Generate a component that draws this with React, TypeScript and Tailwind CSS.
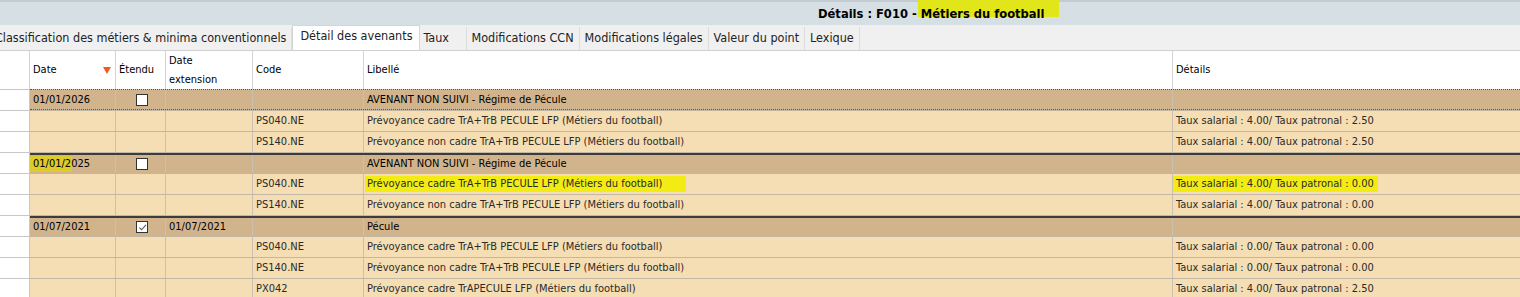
import React from "react";

type Row = {
	group: boolean;
	date?: string;
	extended?: boolean;
	extDate?: string;
	code?: string;
	label: string;
	details?: string;
	focus?: boolean;
	markDate?: boolean;
	markLine?: boolean;
};

const ROWS: Row[] = [
	{ group: true, date: "01/01/2026", extended: false, label: "AVENANT NON SUIVI - Régime de Pécule", focus: true },
	{ group: false, code: "PS040.NE", label: "Prévoyance cadre TrA+TrB PECULE LFP (Métiers du football)", details: "Taux salarial : 4.00/ Taux patronal : 2.50" },
	{ group: false, code: "PS140.NE", label: "Prévoyance non cadre TrA+TrB PECULE LFP (Métiers du football)", details: "Taux salarial : 4.00/ Taux patronal : 2.50" },
	{ group: true, date: "01/01/2025", extended: false, label: "AVENANT NON SUIVI - Régime de Pécule", markDate: true },
	{ group: false, code: "PS040.NE", label: "Prévoyance cadre TrA+TrB PECULE LFP (Métiers du football)", details: "Taux salarial : 4.00/ Taux patronal : 0.00", markLine: true },
	{ group: false, code: "PS140.NE", label: "Prévoyance non cadre TrA+TrB PECULE LFP (Métiers du football)", details: "Taux salarial : 4.00/ Taux patronal : 0.00" },
	{ group: true, date: "01/07/2021", extended: true, extDate: "01/07/2021", label: "Pécule" },
	{ group: false, code: "PS040.NE", label: "Prévoyance cadre TrA+TrB PECULE LFP (Métiers du football)", details: "Taux salarial : 0.00/ Taux patronal : 0.00" },
	{ group: false, code: "PS140.NE", label: "Prévoyance non cadre TrA+TrB PECULE LFP (Métiers du football)", details: "Taux salarial : 0.00/ Taux patronal : 0.00" },
	{ group: false, code: "PX042", label: "Prévoyance cadre TrAPECULE LFP (Métiers du football)", details: "Taux salarial : 4.00/ Taux patronal : 2.50" },
];

const TABS = [
	"Classification des métiers & minima conventionnels",
	"Détail des avenants",
	"Taux",
	"Modifications CCN",
	"Modifications légales",
	"Valeur du point",
	"Lexique",
];

function Checkbox({ checked }: { checked?: boolean }) {
	return (
		<span className="flex h-[12px] w-[12px] items-center justify-center border border-[#333] bg-white">
			{checked && (
				<svg viewBox="0 0 10 10" className="h-[9px] w-[9px]" fill="none" stroke="#555" strokeWidth={1.2}>
					<path d="M1.5 5.2 L4 7.5 L8.8 2" />
				</svg>
			)}
		</span>
	);
}

export default function App() {
	return (
		<div className="h-[297px] w-[1520px] overflow-hidden bg-white text-[11px] text-[#222] font-['DejaVu_Sans_Condensed','DejaVu_Sans',sans-serif]">
			{/* title bar */}
			<div className="flex h-[25px] items-center border-t-2 border-[#c4cbd0] bg-[#d6dfe4] pl-[818px] text-[12.8px] font-bold text-black">
				<span className="whitespace-pre">Détails : F010 - </span>
				<span className="relative">
					{/* marker highlight */}
					<span className="absolute -left-[3px] -right-[15px] -top-[10px] bottom-[6px] bg-[#e0e61a]" />
					<span className="relative">Métiers du football</span>
				</span>
			</div>

			{/* tabs */}
			<div className="flex h-[26px] items-end border-b border-[#d0d0d0] bg-[#f0f0f0] text-[12.5px]">
				{TABS.map((t, i) => (
					<div
						key={t}
						className={
							i === 1
								? "flex h-[25px] items-center border-x border-t border-[#d6d6d6] bg-white pl-[7px] pr-[6px] pb-[3px]"
								: i === 2
									? "flex h-[23px] min-w-[47px] items-center border-r border-[#dcdcdc] px-[4px]"
									: `flex h-[23px] items-center border-r border-[#dcdcdc] px-[5px] ${i === 0 ? "-ml-[10px]" : ""}`
						}
					>
						{t}
					</div>
				))}
			</div>

			{/* header */}
			<div className="flex h-[39px] border-b border-[#c8c8c8] text-[11px] text-black">
				<div className="w-[30px] border-r border-[#d4d4d4]" />
				<div className="flex w-[86px] items-center justify-between border-r border-[#d4d4d4] pl-[3px] pr-[4px]">
					<span>Date</span>
					<svg viewBox="0 0 8 7" className="h-[7px] w-[8px]">
						<path d="M0 0 H8 L4 7 Z" fill="#f05a1e" />
					</svg>
				</div>
				<div className="flex w-[50px] items-center border-r border-[#d4d4d4] pl-[3px]">Étendu</div>
				<div className="flex w-[87px] items-center border-r border-[#d4d4d4] pl-[3px] leading-[19px]">
					Date
					<br />
					extension
				</div>
				<div className="flex w-[111px] items-center border-r border-[#d4d4d4] pl-[3px]">Code</div>
				<div className="flex w-[809px] items-center border-r border-[#d4d4d4] pl-[3px]">Libellé</div>
				<div className="flex flex-1 items-center pl-[3px]">Détails</div>
			</div>

			{/* rows */}
			{ROWS.map((r, i) => {
				const bg = r.group ? "bg-[#d2b48c]" : "bg-[#f5deb3]";
				const sep = r.group && i > 0 ? "border-t-2 border-t-[#3c3c3c]" : "";
				const cell = "flex items-center border-r border-[#c9c0b2] pl-[3px]";
				return (
					<div key={i} className="flex h-[21px]">
						<div className="w-[30px] border-b border-r border-[#c8c8c8] bg-white" />
						<div
							className={`relative flex flex-1 border-b border-[#c2b6a4] ${bg} ${sep} ${r.group ? "text-black" : "text-[#2a2a2a]"}`}
						>
							{r.focus && (
								<div className="pointer-events-none absolute inset-x-0 -top-px bottom-0 border-y border-dotted border-[#555]" />
							)}
							<div className={`${cell} w-[86px]`}>
								{r.date &&
									(r.markDate ? (
										<span className="-ml-[3px] bg-[linear-gradient(90deg,#dccb2e_0,#dccb2e_42px,transparent_42px)] pl-[3px]">{r.date}</span>
									) : (
										r.date
									))}
							</div>
							<div className={`${cell} w-[50px] justify-center pl-0`}>
								{r.group && <Checkbox checked={r.extended} />}
							</div>
							<div className={`${cell} w-[87px]`}>{r.extDate}</div>
							<div className={`${cell} w-[111px]`}>{r.code}</div>
							<div className={`${cell} w-[809px]`}>
								{r.markLine ? (
									<span className="-ml-[2px] bg-[#f2ec14] pl-[2px] pr-[24px]">{r.label}</span>
								) : (
									r.label
								)}
							</div>
							<div className="flex flex-1 items-center pl-[3px]">
								{r.markLine ? (
									<span className="-ml-[3px] bg-[#f2ec14] pl-[3px] pr-[4px]">{r.details}</span>
								) : (
									r.details
								)}
							</div>
						</div>
					</div>
				);
			})}
		</div>
	);
}
